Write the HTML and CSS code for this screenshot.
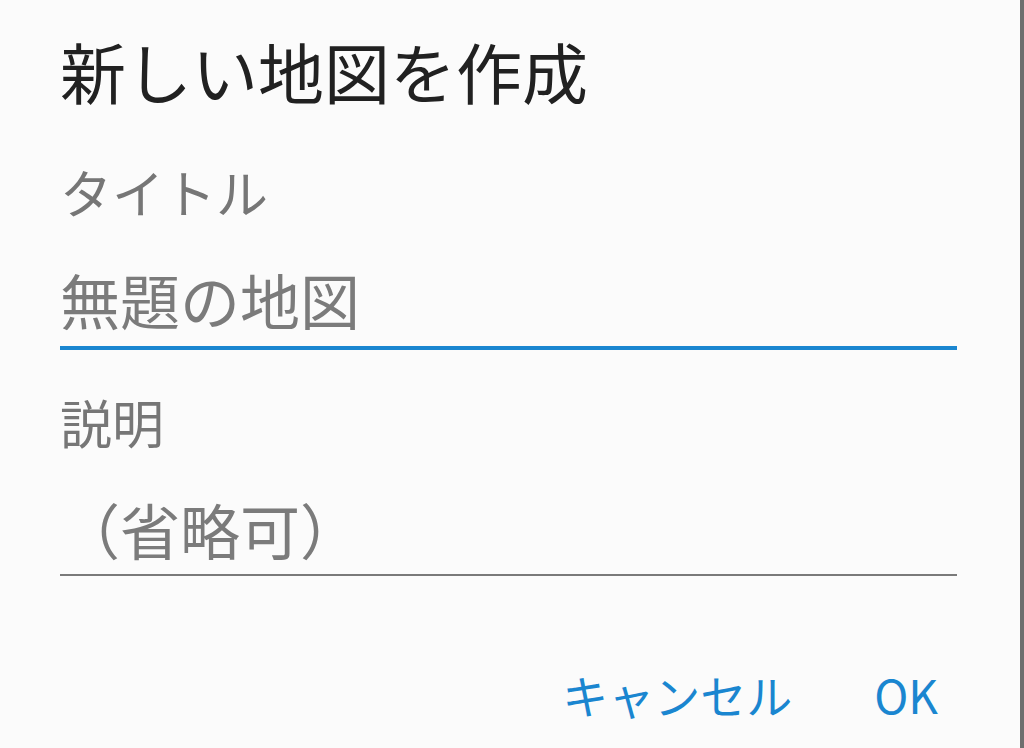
FILE: index.html
```html
<!DOCTYPE html>
<html lang="ja">

<head>
    <meta charset="UTF-8">
    <meta name="viewport" content="width=device-width, initial-scale=1.0">
    <title>新しい地図を作成</title>
    <link rel="stylesheet" href="styles.css">
</head>

<body>
    <div class="dialog">
        <h1 class="dialog-title">新しい地図を作成</h1>

        <div class="field field-title">
            <div class="field-label">タイトル</div>
            <div class="field-input focused">無題の地図</div>
        </div>

        <div class="field field-desc">
            <div class="field-label">説明</div>
            <div class="field-input">（省略可）</div>
        </div>

        <div class="actions">
            <button class="btn">キャンセル</button>
            <button class="btn btn-ok">OK</button>
        </div>
    </div>
</body>

</html>
```

FILE: styles.css
```css
* {
    margin: 0;
    padding: 0;
    box-sizing: border-box;
}

body {
    width: 1024px;
    height: 748px;
    background-color: #fbfbfb;
    border-right: 4px solid #6e6e6e;
    font-family: "Noto Sans CJK JP", "Noto Sans", sans-serif;
    overflow: hidden;
}

.dialog {
    padding: 37px 63px 0 60px;
    display: flex;
    flex-direction: column;
}

.dialog-title {
    font-size: 66px;
    line-height: 1;
    font-weight: 400;
    color: #212121;
}

.field {
    display: flex;
    flex-direction: column;
}

.field-title {
    margin-top: 63px;
}

.field-desc {
    margin-top: 46px;
}

.field-label {
    font-size: 52px;
    line-height: 1;
    color: #767676;
}

.field-input {
    margin-top: 51px;
    font-size: 60px;
    line-height: 1;
    color: #7b7b7b;
    padding-bottom: 15px;
    border-bottom: 2px solid #7a7a7a;
}

.field-input.focused {
    padding-bottom: 17px;
    border-bottom: 4px solid #1a86d0;
}

.actions {
    margin-top: 95px;
    display: flex;
    justify-content: flex-end;
    gap: 82px;
    padding-right: 19px;
}

.btn {
    background: none;
    border: none;
    font-family: "Noto Sans CJK JP", "Noto Sans", sans-serif;
    font-size: 46px;
    line-height: 1;
    color: #1a86d0;
}
```
